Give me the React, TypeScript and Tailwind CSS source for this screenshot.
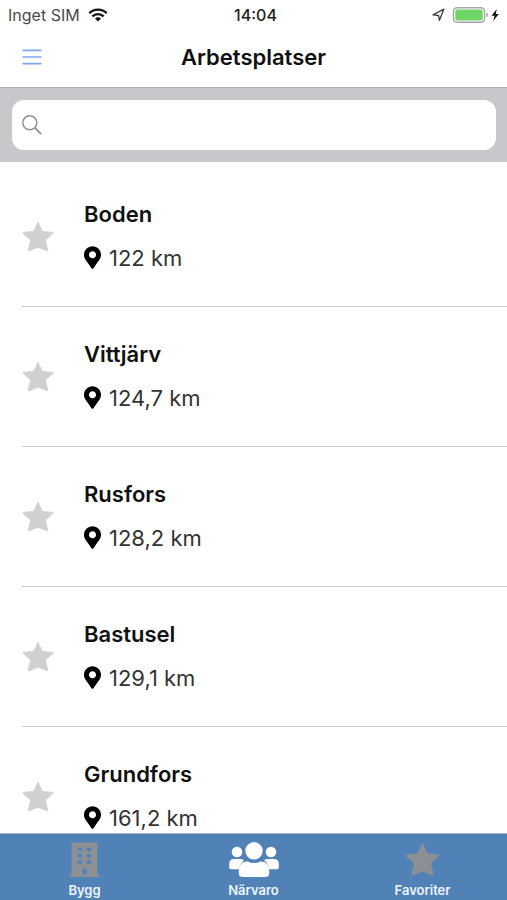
import { FaMapMarkerAlt } from "react-icons/fa";

const places = [
  { name: "Boden", distance: "122 km" },
  { name: "Vittjärv", distance: "124,7 km" },
  { name: "Rusfors", distance: "128,2 km" },
  { name: "Bastusel", distance: "129,1 km" },
  { name: "Grundfors", distance: "161,2 km" },
];

function StarIcon({ className }: { className: string }) {
  return (
    <svg viewBox="0 0 32 31" className={className} fill="currentColor" aria-hidden="true">
      <path
        d="M16 1.2 20.5 10.4 30.9 11.4 31 12.2 23.4 19.1 25.9 29.4 25.2 29.9 16 26.2 6.8 29.9 6.1 29.4 8.6 19.1 1 12.2 1.1 11.4 11.5 10.4Z"
        stroke="currentColor"
        strokeWidth="0.8"
        strokeLinejoin="round"
      />
    </svg>
  );
}

function BuildingIcon() {
  return (
    <svg width="31" height="35" viewBox="0 0 31 35" aria-hidden="true">
      <path d="M2.6 1.2Q2.6.6 3.2.6h24.6q.6 0 .6.6v31h1.4q.7 0 .7.7V35H.5v-2.1q0-.7.7-.7h1.4Z" fill="#8c9095" />
      <path
        d="M8.8 6h4.4v3H8.8ZM17.8 6h4.4v3h-4.4ZM8.8 12h4.4v3.6H8.8ZM17.8 12h4.4v3.6h-4.4ZM8.8 18.4h4.4V22H8.8ZM17.8 18.4h4.4V22h-4.4ZM13.4 27h4.2v4.2q0 1.3-2.1 1.3t-2.1-1.3Z"
        fill="#5082b8"
      />
    </svg>
  );
}

function PeopleIcon() {
  return (
    <svg width="50" height="35" viewBox="0 0 50 35" fill="#fff" aria-hidden="true">
      <circle cx="25" cy="8.8" r="8.7" />
      <circle cx="8" cy="10" r="5.3" />
      <circle cx="42" cy="10" r="5.3" />
      <path d="M5.2 17h6.3q2 0 3.4 1.4Q10.600 21.500 9.900 27.300H2Q.2 27.300.2 25.500V22q0-5 5-5ZM44.800 17h-6.300q-2 0-3.400 1.400 4.300 3.100 5 8.900H48q1.800 0 1.800-1.800V22q0-5-5-5Z" />
      <path d="M18.600 19.500q2.900 1.500 6.400 1.500t6.400-1.500q8.800-.200 8.800 9.500v2.600q0 3.300-3.300 3.300H13.100q-3.300 0-3.300-3.300V29q0-9.700 8.800-9.500Z" />
    </svg>
  );
}

function StatusBar() {
  return (
    <div className="grid h-[30px] shrink-0 grid-cols-3 items-center px-2 text-base leading-5 text-[#4a4a4a]">
      <div className="flex items-center gap-2">
        <span>Inget SIM</span>
        <svg width="20" height="14" viewBox="0 0 20 14" fill="none" stroke="#111" strokeWidth="2.3" aria-hidden="true">
          <path d="M1.3 5.1a12.4 12.4 0 0 1 17.4 0M4.4 8.4a8 8 0 0 1 11.2 0" />
          <path d="M10 13.4 7 10.6a4.3 4.3 0 0 1 6 0Z" fill="#111" stroke="none" />
        </svg>
      </div>
      <span className="pl-1 text-center font-medium text-[#222]">14:04</span>
      <div className="flex items-center justify-end">
        <svg width="68" height="16" viewBox="0 0 68 16" aria-hidden="true">
          <path d="M2 7.8 12.8 2.2 8.4 13.3 7.6 8.5Z" fill="none" stroke="#444" strokeWidth="1.4" strokeLinejoin="round" />
          <rect x="22.5" y="0.7" width="31" height="14.6" rx="3.8" fill="#fff" stroke="#a5a3a8" strokeWidth="1.4" />
          <rect x="24.3" y="2.5" width="27.4" height="11" rx="1.8" fill="#70d567" />
          <path d="M55.4 5.6v4.6q1.5-.6 1.5-2.3t-1.5-2.3Z" fill="#999" />
          <path d="m65.8 2-5.3 6.7h3.1L62.2 14l5.6-7.1h-3Z" fill="#111" />
        </svg>
      </div>
    </div>
  );
}

function Header() {
  return (
    <header className="grid h-[57px] shrink-0 grid-cols-[40px_1fr_40px] items-center px-3 pb-[3px]">
      <button type="button" aria-label="Meny" className="flex h-10 w-10 items-center justify-center">
        <svg width="20" height="16" viewBox="0 0 20 16" stroke="#80a6ee" strokeWidth="1.7" aria-hidden="true">
          <path d="M.5 1.3h19M.5 8h19M.5 14.7h19" />
        </svg>
      </button>
      <h1 className="text-center text-[22px] leading-7 font-semibold text-[#111]">Arbetsplatser</h1>
    </header>
  );
}

function SearchBar() {
  return (
    <div className="shrink-0 border-t border-[#b2b2b4] bg-[#c8c7cc] py-3 pr-[11px] pl-3">
      <label className="flex h-[50px] items-center gap-2 rounded-xl bg-white px-[10px]">
        <svg width="20" height="20" viewBox="0 0 20 20" fill="none" stroke="#929292" aria-hidden="true">
          <circle cx="7.8" cy="7.8" r="7" strokeWidth="1.5" />
          <path d="m12.9 12.9 6.2 6.2" strokeWidth="2" />
        </svg>
        <input type="search" aria-label="Sök arbetsplats" className="min-w-0 flex-1 bg-transparent text-lg outline-none" />
      </label>
    </div>
  );
}

export default function App() {
  return (
    <div className="flex h-screen flex-col overflow-hidden bg-white font-['Inter',sans-serif]">
      <StatusBar />
      <Header />
      <SearchBar />
      <main className="min-h-0 flex-1 overflow-hidden pt-[5px]">
        <ul className="pl-[22px]">
          {places.map((place) => (
            <li key={place.name} className="flex h-[140px] items-center gap-[30px] border-b border-[#c8c7cc]">
              <button type="button" aria-label={"Spara " + place.name} className="flex w-8 justify-center text-[#d0d0d0]">
                <StarIcon className="h-[31px] w-8" />
              </button>
              <div className="flex flex-col gap-4 pb-[2px]">
                <h2 className="text-[22px] leading-7 font-semibold text-[#111]">{place.name}</h2>
                <p className="flex items-center gap-2 text-[22px] leading-7 text-[#333]">
                  <FaMapMarkerAlt className="h-[23px] w-[17px] text-black" />
                  {place.distance}
                </p>
              </div>
            </li>
          ))}
        </ul>
      </main>
      <nav className="grid h-[67px] shrink-0 grid-cols-3 border-t border-[#a5b5d0] bg-[#5082b8] text-[13px] leading-4 font-semibold text-[#eef4fb]">
        <button type="button" className="flex flex-col items-center gap-[5px] pt-2">
          <BuildingIcon />
          Bygg
        </button>
        <button type="button" aria-current="page" className="flex flex-col items-center gap-[5px] pt-2">
          <PeopleIcon />
          Närvaro
        </button>
        <button type="button" className="flex flex-col items-center gap-[5px] pt-2 text-[#eef4fb]">
          <StarIcon className="h-[35px] w-[35px] text-[#8c9095]" />
          Favoriter
        </button>
      </nav>
    </div>
  );
}
